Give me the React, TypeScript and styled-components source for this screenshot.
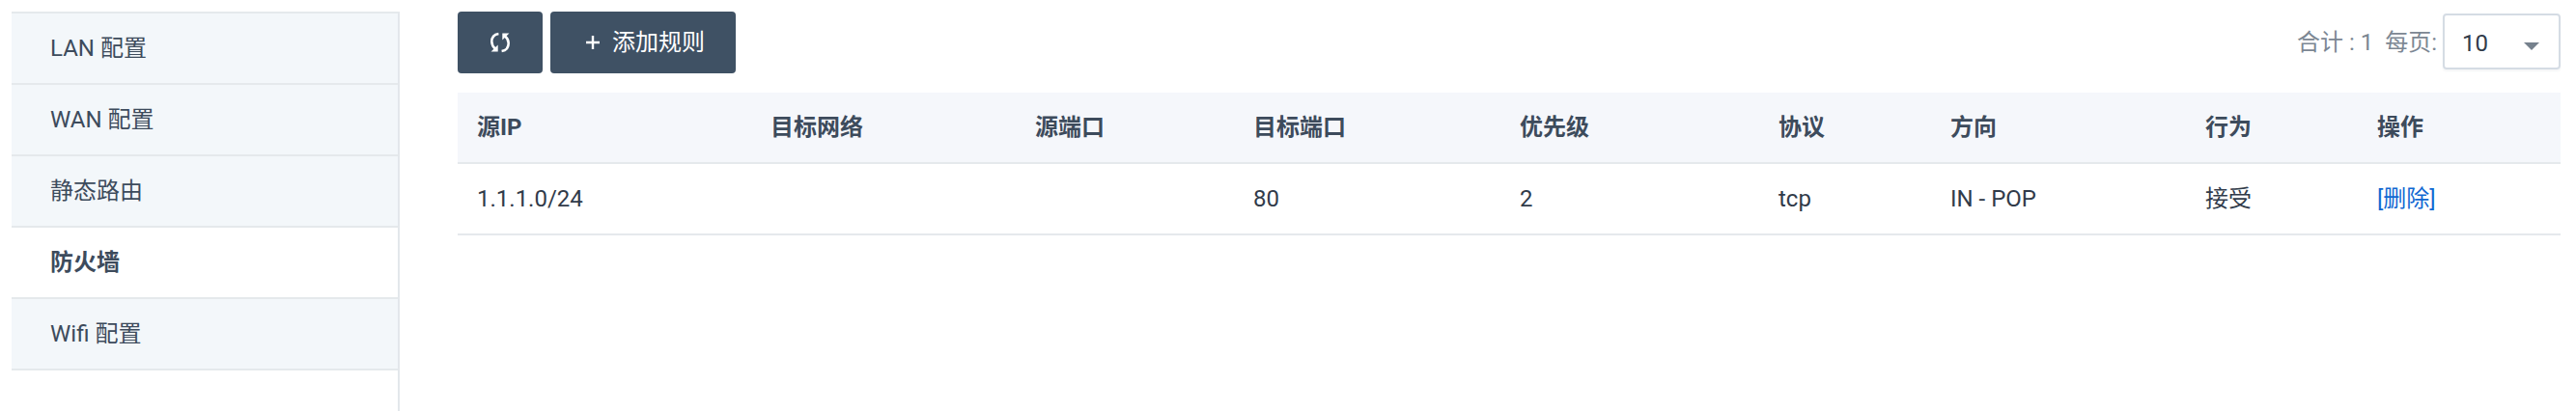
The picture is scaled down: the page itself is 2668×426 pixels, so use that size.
import React from "react";
import styled, { createGlobalStyle } from "styled-components";

const GlobalStyle = createGlobalStyle`
  *, *::before, *::after { box-sizing: border-box; }
  body {
    margin: 0;
    background: #fff;
    color: #313b4a;
    font: 24px/36px Roboto, "Noto Sans CJK SC", sans-serif;
  }
`;

const Page = styled.div`
  display: flex;
  height: 426px;
  padding: 12px 16px 0 12px;
  overflow: hidden;
`;

const Sidebar = styled.nav`
  flex: none;
  width: 402px;
  margin-right: 60px;
  border-top: 2px solid #e5e9ec;
  border-right: 2px solid #e3e7eb;
`;

const NavItem = styled.a<{ $active?: boolean }>`
  display: flex;
  align-items: center;
  height: 74px;
  padding: 0 40px 0;
  border-bottom: 2px solid #e5e9ec;
  background: ${(p) => (p.$active ? "#fff" : "#f3f7fa")};
  color: #3d4b5c;
  font-weight: ${(p) => (p.$active ? 700 : 400)};
`;

const Main = styled.main`
  flex: 1;
  min-width: 0;
`;

const Toolbar = styled.div`
  display: flex;
  gap: 8px;
  height: 84px;
  align-items: flex-start;
`;

const Button = styled.button<{ $width: number; $inset?: number }>`
  display: flex;
  align-items: center;
  justify-content: center;
  gap: 13px;
  width: ${(p) => p.$width}px;
  height: 64px;
  padding: 0 0 0 ${(p) => p.$inset ?? 0}px;
  border: 0;
  border-radius: 4px;
  background: #3f5164;
  color: #fff;
  font: inherit;
`;

const Pager = styled.div`
  display: flex;
  align-items: flex-start;
  margin-left: auto;
  color: #7c8793;
`;

const PagerLabel = styled.span`
  margin: 14px 6px 0 0;
  white-space: pre;
`;

const Select = styled.div`
  display: flex;
  align-items: center;
  justify-content: space-between;
  width: 122px;
  height: 58px;
  margin-top: 2px;
  padding: 4px 20px 0 18px;
  border: 2px solid #d5dce4;
  border-radius: 4px;
  box-shadow: 0 2px 2px rgba(60, 80, 100, 0.05);
  color: #313b4a;
`;

const Table = styled.table`
  width: 2178px;
  table-layout: fixed;
  border-collapse: separate;
  border-spacing: 0;
  text-align: left;
`;

const Cell = styled.td`
  height: 74px;
  padding: 0 20px;
  border-bottom: 2px solid #e5e9ec;
`;

const HeadCell = styled(Cell).attrs({ as: "th" })`
  background: #f5f7fb;
  color: #3d4b5c;
  font-weight: 700;
`;

const Link = styled.a`
  color: #1168d2;
`;

const CaretIcon = styled.svg`
  margin-top: 5px;
`;

const columns = [
  { title: "源IP", width: 304 },
  { title: "目标网络", width: 274 },
  { title: "源端口", width: 226 },
  { title: "目标端口", width: 276 },
  { title: "优先级", width: 268 },
  { title: "协议", width: 178 },
  { title: "方向", width: 264 },
  { title: "行为", width: 178 },
  { title: "操作", width: 210 },
];

const rules = [["1.1.1.0/24", "", "", "80", "2", "tcp", "IN - POP", "接受"]];
const menu = ["LAN 配置", "WAN 配置", "静态路由", "防火墙", "Wifi 配置"];

const RefreshIcon = () => (
  <svg width="22" height="22" viewBox="0 0 22 22" fill="none" stroke="#fff" strokeWidth="2.6">
    <path d="M9.4 2C5 2.7 2.3 6 2.3 10.3c0 3.2 1.6 5.5 3.8 7.4" />
    <path d="M12.6 20c4.4-.7 7.1-4 7.1-8.3 0-3.2-1.6-5.5-3.8-7.4" />
    <path d="M1.6 20.5h7.1v-7.1zM20.4 1.5h-7.1v7.1z" fill="#fff" stroke="none" />
  </svg>
);

const PlusIcon = () => (
  <svg width="14" height="14" viewBox="0 0 14 14" stroke="#fff" strokeWidth="2.4">
    <path d="M7 0v14M0 7h14" />
  </svg>
);

const Caret = () => (
  <CaretIcon width="16" height="8" viewBox="0 0 16 8">
    <path d="M0 0h16L8 8z" fill="#76818d" />
  </CaretIcon>
);

export default function App() {
  return (
    <Page>
      <GlobalStyle />
      <Sidebar>
        {menu.map((item) => (
          <NavItem key={item} $active={item === "防火墙"}>{item}</NavItem>
        ))}
      </Sidebar>
      <Main>
        <Toolbar>
          <Button $width={88} aria-label="刷新"><RefreshIcon /></Button>
          <Button $width={192} $inset={5}><PlusIcon />添加规则</Button>
          <Pager>
            <PagerLabel>{"合计 : 1  每页:"}</PagerLabel>
            <Select>10<Caret /></Select>
          </Pager>
        </Toolbar>
        <Table>
          <colgroup>
            {columns.map((c) => <col key={c.title} width={c.width} />)}
          </colgroup>
          <thead>
            <tr>{columns.map((c) => <HeadCell key={c.title}>{c.title}</HeadCell>)}</tr>
          </thead>
          <tbody>
            {rules.map((row) => (
              <tr key={row[0]}>
                {row.map((value, i) => <Cell key={columns[i].title}>{value}</Cell>)}
                <Cell><Link>[删除]</Link></Cell>
              </tr>
            ))}
          </tbody>
        </Table>
      </Main>
    </Page>
  );
}
